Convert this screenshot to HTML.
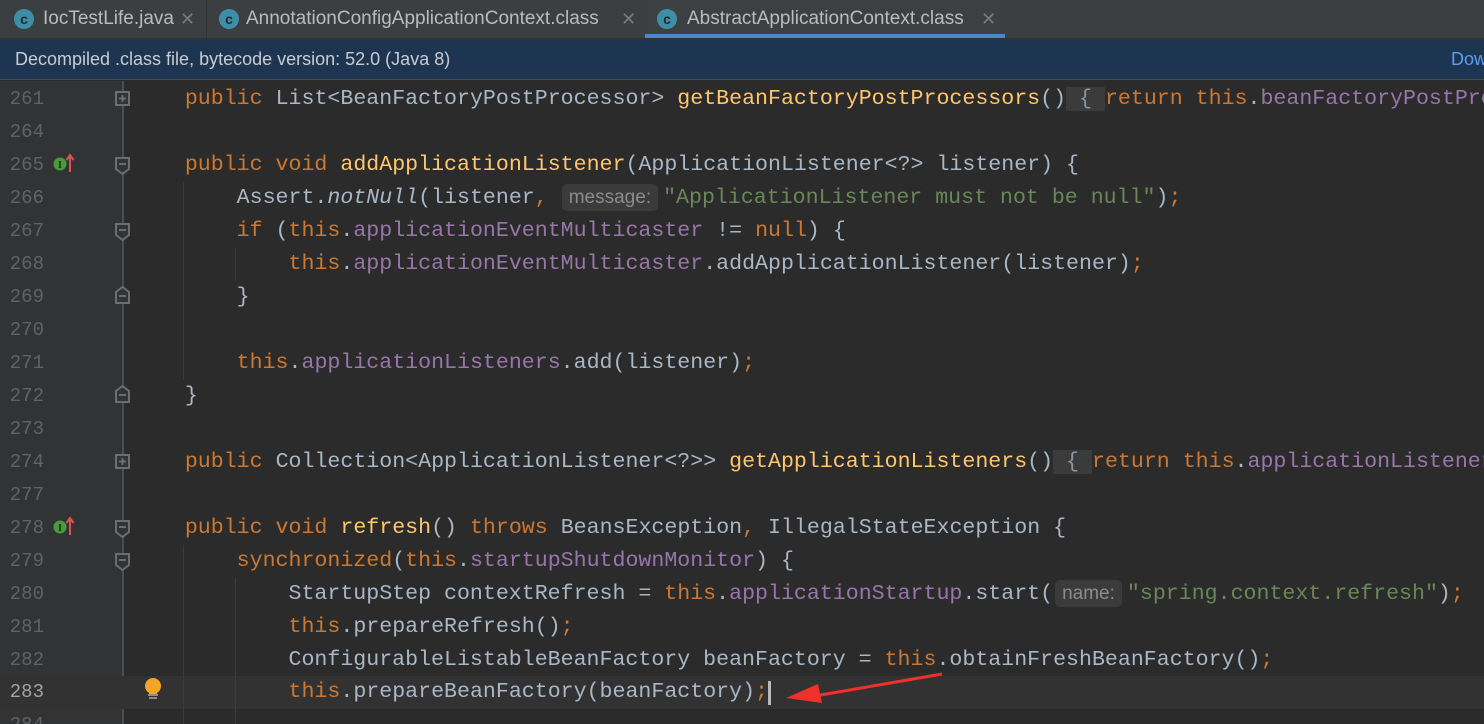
<!DOCTYPE html>
<html><head><meta charset="utf-8"><style>
*{margin:0;padding:0;box-sizing:border-box}
html,body{width:1484px;height:724px;overflow:hidden}
body{background:#2b2b2b;position:relative;font-family:"Liberation Sans",sans-serif}
.tabs{position:absolute;left:0;top:0;width:1484px;height:39px;background:#3c3f41;border-bottom:1px solid #323232;overflow:hidden}
.tab{position:absolute;top:0;height:38px;color:#bbbbbb;font-size:19px;line-height:38px;white-space:nowrap}
.ic{position:absolute;top:9px;width:20px;height:20px;border-radius:50%;background:#3f8ea8;color:#1d2b33;font-size:14px;line-height:20px;text-align:center;font-weight:bold}
.x{color:#7a7a7a;font-size:18px}
.banner{position:absolute;left:0;top:39px;width:1484px;height:41px;background:#1e3551;border-bottom:1px solid #4a4d50;color:#c8ccd0;font-size:18px;line-height:41px;padding-left:15px;overflow:hidden;white-space:nowrap}
.gutter{position:absolute;left:0;top:81px;width:122px;height:643px;background:#313335}
.fl{position:absolute;left:122px;top:81px;width:2px;height:643px;background:#4b4d4f}
.row{position:absolute;left:0;height:33px;width:1484px;overflow:hidden}
.ln{position:absolute;left:0;width:44px;text-align:right;color:#606366;font-family:"Liberation Mono",monospace;font-size:19px;line-height:33px}
.code{position:absolute;left:133px;top:0;font-family:"Liberation Mono",monospace;font-size:21.6px;line-height:33px;white-space:pre;color:#a9b7c6}
.k{color:#cc7832}.f{color:#9876aa}.m{color:#ffc66d}.s{color:#6a8759}
.hint{display:inline-block;background:#3b3b3b;color:#8c8c8c;font-family:"Liberation Sans",sans-serif;font-size:19px;line-height:27px;border-radius:5px;padding:0 7px;vertical-align:middle;margin:0 5px 0 14px}
.fold{background:#3b3b3b;color:#8a96a0}
.guide{position:absolute;width:1px;background:#3b3b3b}
</style></head><body>
<div class="tabs">
 <div class="tab" style="left:0;width:205px"><span class="ic" style="left:14px">c</span><span style="position:absolute;left:43px">IocTestLife.java</span><span class="x" style="position:absolute;left:180px">✕</span></div>
 <div style="position:absolute;left:206px;top:0;width:1px;height:38px;background:#323232"></div>
 <div class="tab" style="left:207px;width:436px"><span class="ic" style="left:12px">c</span><span style="position:absolute;left:39px">AnnotationConfigApplicationContext.class</span><span class="x" style="position:absolute;left:414px">✕</span></div>
 <div class="tab" style="left:645px;width:360px;background:#3d4043"><span class="ic" style="left:12px">c</span><span style="position:absolute;left:42px">AbstractApplicationContext.class</span><span class="x" style="position:absolute;left:336px">✕</span><div style="position:absolute;left:0;bottom:0;width:360px;height:4px;background:#4a88c7"></div></div>
</div>
<div class="banner">Decompiled .class file, bytecode version: 52.0 (Java 8)<span style="position:absolute;left:1451px;color:#589df6">Dow</span></div>
<div class="gutter"></div>
<div class="fl"></div>
<div class="row" style="top:676px;background:#323232"></div>
<div class="guide" style="left:183px;top:182px;height:198px"></div>
<div class="guide" style="left:235px;top:248px;height:33px"></div>
<div class="guide" style="left:183px;top:545px;height:179px"></div>
<div class="guide" style="left:235px;top:578px;height:146px"></div>

<div class="row" style="top:83px"><div class="ln">261</div><div class="code">    <span class="k">public</span> List&lt;BeanFactoryPostProcessor&gt; <span class="m">getBeanFactoryPostProcessors</span>()<span class="fold"> { </span><span class="k">return this</span>.<span class="f">beanFactoryPostProcessors</span><span class="k">;</span> }</div></div>
<div class="row" style="top:116px"><div class="ln">264</div></div>
<div class="row" style="top:149px"><div class="ln">265</div><div class="code">    <span class="k">public void</span> <span class="m">addApplicationListener</span>(ApplicationListener&lt;?&gt; listener) {</div></div>
<div class="row" style="top:182px"><div class="ln">266</div><div class="code">        Assert.<i>notNull</i>(listener<span class="k">,</span><span class="hint">message:</span><span class="s">"ApplicationListener must not be null"</span>)<span class="k">;</span></div></div>
<div class="row" style="top:215px"><div class="ln">267</div><div class="code">        <span class="k">if</span> (<span class="k">this</span>.<span class="f">applicationEventMulticaster</span> != <span class="k">null</span>) {</div></div>
<div class="row" style="top:248px"><div class="ln">268</div><div class="code">            <span class="k">this</span>.<span class="f">applicationEventMulticaster</span>.addApplicationListener(listener)<span class="k">;</span></div></div>
<div class="row" style="top:281px"><div class="ln">269</div><div class="code">        }</div></div>
<div class="row" style="top:314px"><div class="ln">270</div></div>
<div class="row" style="top:347px"><div class="ln">271</div><div class="code">        <span class="k">this</span>.<span class="f">applicationListeners</span>.add(listener)<span class="k">;</span></div></div>
<div class="row" style="top:380px"><div class="ln">272</div><div class="code">    }</div></div>
<div class="row" style="top:413px"><div class="ln">273</div></div>
<div class="row" style="top:446px"><div class="ln">274</div><div class="code">    <span class="k">public</span> Collection&lt;ApplicationListener&lt;?&gt;&gt; <span class="m">getApplicationListeners</span>()<span class="fold"> { </span><span class="k">return this</span>.<span class="f">applicationListeners</span><span class="k">;</span> }</div></div>
<div class="row" style="top:479px"><div class="ln">277</div></div>
<div class="row" style="top:512px"><div class="ln">278</div><div class="code">    <span class="k">public void</span> <span class="m">refresh</span>() <span class="k">throws</span> BeansException<span class="k">,</span> IllegalStateException {</div></div>
<div class="row" style="top:545px"><div class="ln">279</div><div class="code">        <span class="k">synchronized</span>(<span class="k">this</span>.<span class="f">startupShutdownMonitor</span>) {</div></div>
<div class="row" style="top:578px"><div class="ln">280</div><div class="code">            StartupStep contextRefresh = <span class="k">this</span>.<span class="f">applicationStartup</span>.start(<span class="hint" style="margin-left:2px">name:</span><span class="s">"spring.context.refresh"</span>)<span class="k">;</span></div></div>
<div class="row" style="top:611px"><div class="ln">281</div><div class="code">            <span class="k">this</span>.prepareRefresh()<span class="k">;</span></div></div>
<div class="row" style="top:644px"><div class="ln">282</div><div class="code">            ConfigurableListableBeanFactory beanFactory = <span class="k">this</span>.obtainFreshBeanFactory()<span class="k">;</span></div></div>
<div class="row" style="top:676px"><div class="ln" style="color:#a4a3a3">283</div><div class="code">            <span class="k">this</span>.prepareBeanFactory(beanFactory)<span class="k">;</span></div></div>
<div class="row" style="top:709px;height:15px"><div class="ln">284</div></div>
<div style="position:absolute;left:768px;top:681px;width:3px;height:24px;background:#bbbbbb"></div>

<svg width="1484" height="724" style="position:absolute;left:0;top:0" xmlns="http://www.w3.org/2000/svg">
 <g fill="#313335" stroke="#6b6d6f" stroke-width="2">
  <rect x="116" y="92" width="13" height="13"/>
  <rect x="116" y="455" width="13" height="13"/>
  <path d="M116 158h13v11l-6.5 5l-6.5-5z"/>
  <path d="M116 224h13v11l-6.5 5l-6.5-5z"/>
  <path d="M116 521h13v11l-6.5 5l-6.5-5z"/>
  <path d="M116 554h13v11l-6.5 5l-6.5-5z"/>
  <path d="M116 303h13v-11l-6.5-5l-6.5 5z"/>
  <path d="M116 402h13v-11l-6.5-5l-6.5 5z"/>
 </g>
 <g stroke="#6b6d6f" stroke-width="2">
  <path d="M119 98.5h7M122.5 95v7M119 461.5h7M122.5 458v7M119 164h7M119 230h7M119 527h7M119 560h7M119 296h7M119 395h7"/>
 </g>
 <g>
  <circle cx="60" cy="164" r="6.5" fill="#4a9c3a"/><text x="60" y="168" font-size="10" font-family="Liberation Serif" font-weight="bold" text-anchor="middle" fill="#1e2b1a">I</text>
  <path d="M70 172V156M66.5 160L70 155L73.5 160" stroke="#d9534f" stroke-width="2" fill="none"/>
  <circle cx="60" cy="527" r="6.5" fill="#4a9c3a"/><text x="60" y="531" font-size="10" font-family="Liberation Serif" font-weight="bold" text-anchor="middle" fill="#1e2b1a">I</text>
  <path d="M70 535V519M66.5 523L70 518L73.5 523" stroke="#d9534f" stroke-width="2" fill="none"/>
 </g>
 <g>
  <circle cx="153" cy="686" r="8" fill="#f3a52a"/><rect x="149" y="690" width="8" height="4" fill="#f3a52a"/>
  <path d="M148 695h10M149 698h8" stroke="#aaa" stroke-width="1.5"/>
 </g>
 <path d="M942 674L815 696" stroke="#f0302a" stroke-width="3"/>
 <path d="M786 698L818 684L822 703z" fill="#f0302a"/>
</svg>
</body></html>
